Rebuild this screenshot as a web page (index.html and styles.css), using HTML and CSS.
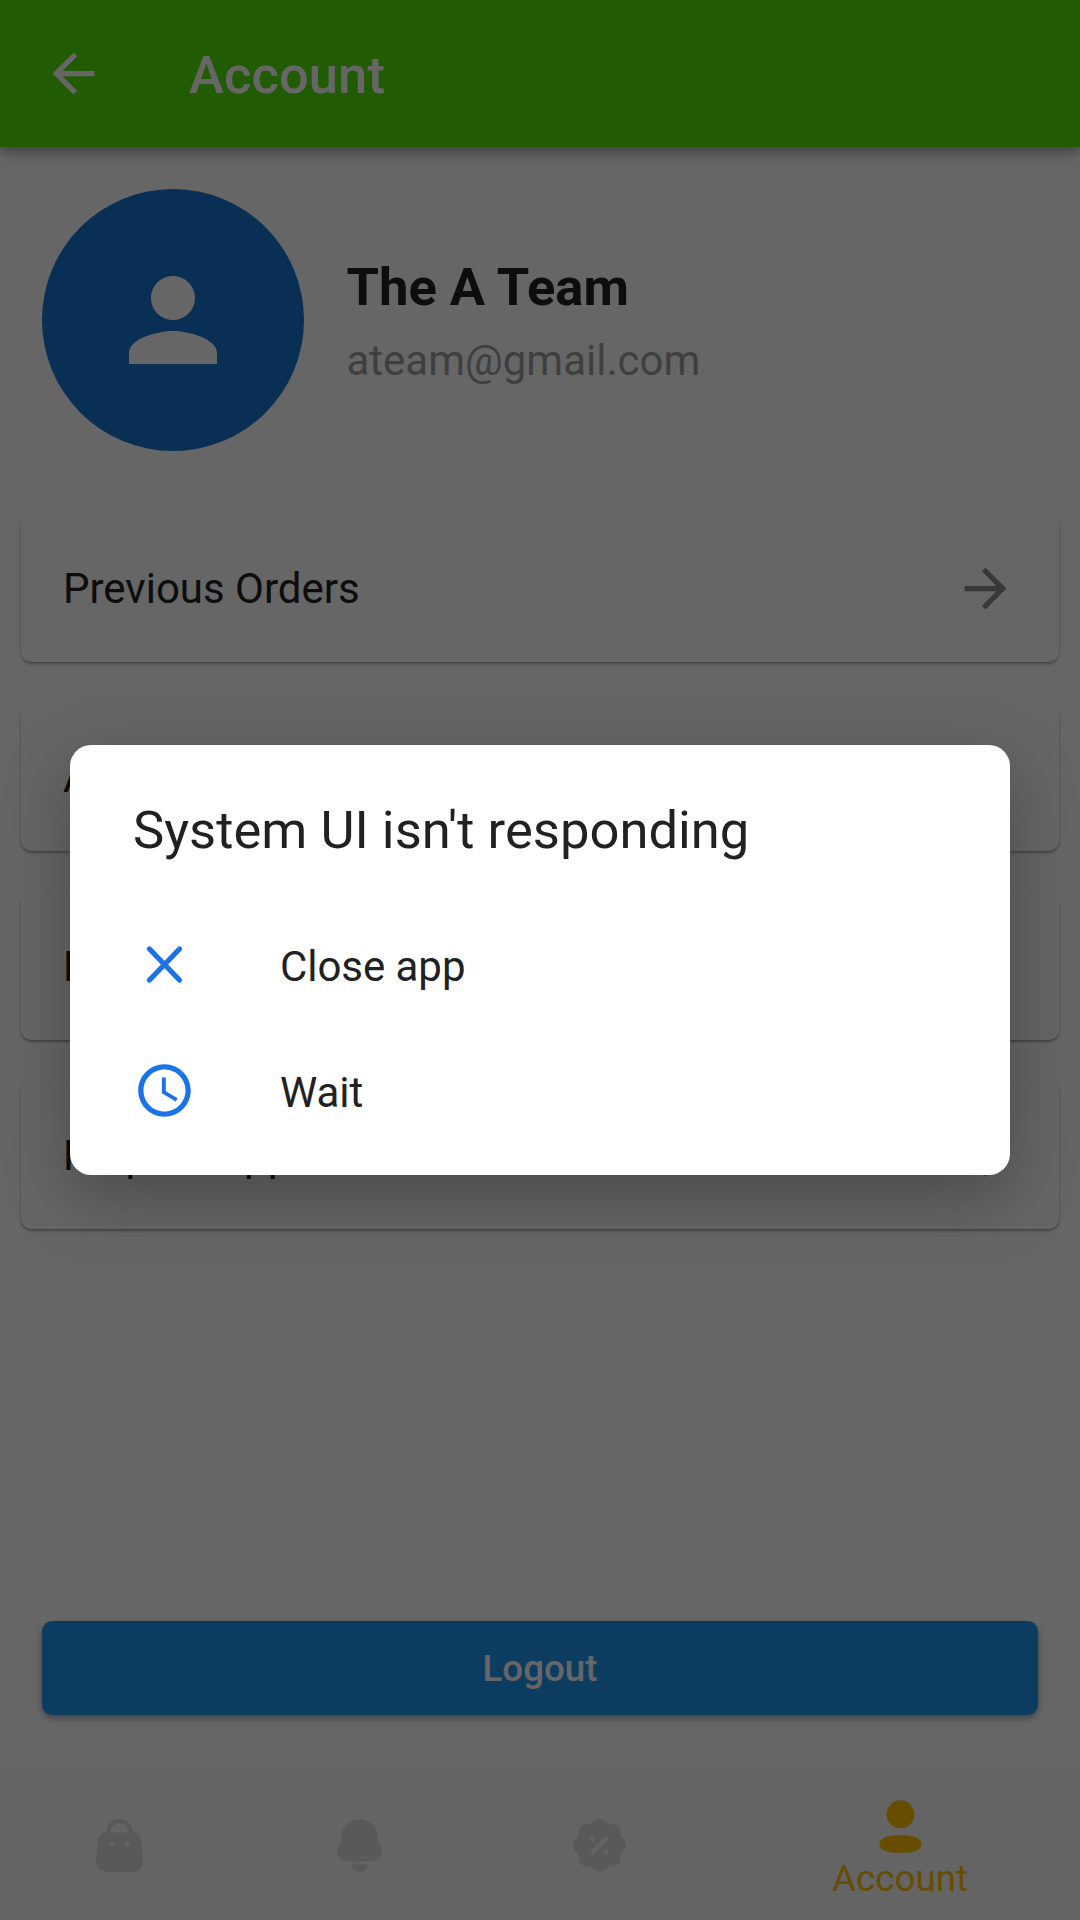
FILE: index.html
```html
<!DOCTYPE html>
<html lang="en">
<head>
<meta charset="utf-8">
<title>Account</title>
<link rel="stylesheet" href="styles.css">
</head>
<body>
<div class="screen">
  <header class="app-bar">
    <svg class="icon" viewBox="0 0 24 24"><path d="M20 11H7.83l5.59-5.59L12 4l-8 8 8 8 1.41-1.41L7.83 13H20v-2z"/></svg>
    <h1 class="app-title">Account</h1>
  </header>

  <main class="content">
    <section class="profile">
      <div class="avatar">
        <svg class="avatar-icon" viewBox="0 0 24 24"><path d="M12 12c2.21 0 4-1.79 4-4s-1.79-4-4-4-4 1.79-4 4 1.79 4 4 4zm0 2c-2.67 0-8 1.34-8 4v2h16v-2c0-2.66-5.33-4-8-4z"/></svg>
      </div>
      <div class="identity">
        <div class="name">The A Team</div>
        <div class="email">ateam@gmail.com</div>
      </div>
    </section>

    <nav class="menu">
      <div class="card"><span>Previous Orders</span><svg class="icon" viewBox="0 0 24 24"><path d="M12 4l-1.41 1.41L16.17 11H4v2h12.17l-5.58 5.59L12 20l8-8z"/></svg></div>
      <div class="card"><span>Address</span><svg class="icon" viewBox="0 0 24 24"><path d="M12 4l-1.41 1.41L16.17 11H4v2h12.17l-5.58 5.59L12 20l8-8z"/></svg></div>
      <div class="card"><span>Payment</span><svg class="icon" viewBox="0 0 24 24"><path d="M12 4l-1.41 1.41L16.17 11H4v2h12.17l-5.58 5.59L12 20l8-8z"/></svg></div>
      <div class="card"><span>Help &amp; Support</span><svg class="icon" viewBox="0 0 24 24"><path d="M12 4l-1.41 1.41L16.17 11H4v2h12.17l-5.58 5.59L12 20l8-8z"/></svg></div>
    </nav>

    <div class="logout">Logout</div>
  </main>

  <footer class="bottom-nav">
    <div class="tab">
      <svg class="icon" viewBox="0 0 63 63">
        <path d="M20.500 19.500V18a11 11 0 0 1 22 0V19.500" fill="none" stroke="currentColor" stroke-width="4"/>
        <path fill-rule="evenodd" d="M18.500 18.500H44.500Q51.500 18.500 52.600 26L55 44Q56.300 57.900 43 57.900H20Q6.700 57.900 8 44L10.400 26Q11.500 18.500 18.500 18.500ZM23.700 27a2.500 2.500 0 1 0 .01 0ZM39 27a2.500 2.500 0 1 0 .01 0Z"/>
      </svg>
    </div>
    <div class="tab">
      <svg class="icon" viewBox="0 0 63 63">
        <path d="M31.500 5.200C41.500 5.200 49.400 13 49.400 22.500C49.400 27 49.200 27.500 51.500 30.500C53.300 32.800 54 34.500 54 37.500C53.500 43.500 49 46.900 43 47.200Q31.500 47.700 20 47.200C14 46.900 9.500 43.500 9 37.500C9 34.500 9.700 32.800 11.500 30.500C13.800 27.500 13.600 27 13.600 22.500C13.600 13 21.500 5.200 31.500 5.200Z"/>
        <path d="M26.500 50.200H36.500Q40 50.500 39 53Q36.500 57.900 31.500 57.900Q26.500 57.900 24 53Q23 50.500 26.500 50.200Z"/>
      </svg>
    </div>
    <div class="tab">
      <svg class="icon" viewBox="0 0 63 63">
        <path d="M31.500 5.200C35 5.200 37 7 38.500 8.600Q40 10.200 42.500 10.200H44Q52.500 10.700 52.500 19V20.500Q52.500 23 54.200 24.500C59 28.700 59 34.300 54.200 38.500Q52.500 40 52.500 42.500V44Q52.500 52 44 52.200H42.500Q40 52.200 38.500 54C34.300 58.500 28.700 58.500 24.500 54Q23 52.200 20.500 52.200H19Q10.500 52 10.500 44V42.500Q10.500 40 8.800 38.500C4 34.300 4 28.700 8.800 24.500Q10.500 23 10.500 20.500V19Q10.500 10.700 19 10.200H20.500Q23 10.200 24.500 8.600C26 7 28 5.200 31.500 5.200Z"/>
        <g class="cutout"><path d="M24.700 38.200L38.500 24.500" stroke-width="4" stroke-linecap="round"/><circle cx="24.500" cy="25" r="2.200"/><circle cx="38.300" cy="38" r="2.200"/></g>
      </svg>
    </div>
    <div class="tab tab-active">
      <svg class="icon" viewBox="0 0 63 63">
        <circle cx="31.500" cy="19.300" r="14"/>
        <path d="M31.500 40.300C44 40.300 52.500 42.600 52.500 49.100S44 58 31.500 58S10.500 55.600 10.500 49.100S19 40.300 31.500 40.300Z"/>
      </svg>
      <span>Account</span>
    </div>
  </footer>

  <div class="scrim">
    <section class="dialog" role="dialog">
      <h2 class="dialog-title">System UI isn't responding</h2>
      <div class="option">
        <svg class="icon" viewBox="0 0 24 24"><path d="M6.300 6.100L17.700 17.900M17.700 6.100L6.300 17.900" fill="none" stroke="currentColor" stroke-width="2" stroke-linecap="round"/></svg>
        <span>Close app</span>
      </div>
      <div class="option">
        <svg class="icon" viewBox="0 0 24 24"><path d="M11.990 2C6.470 2 2 6.480 2 12s4.470 10 9.990 10C17.520 22 22 17.520 22 12S17.520 2 11.990 2zM12 20c-4.420 0-8-3.580-8-8s3.580-8 8-8 8 3.580 8 8-3.580 8-8 8zm.5-13H11v6l5.250 3.150.75-1.230-4.500-2.670z"/></svg>
        <span>Wait</span>
      </div>
    </section>
  </div>
</div>
</body>
</html>
```
FILE: styles.css
```css
* {
  box-sizing: border-box;
}

body {
  margin: 0;
  font-family: Roboto, sans-serif;
  font-size: 42px;
  color: #212121;
}

.screen {
  position: relative;
  display: flex;
  flex-direction: column;
  width: 1080px;
  height: 1920px;
  overflow: hidden;
  background: #fff;
}

.icon {
  display: block;
  flex: none;
  width: 63px;
  height: 63px;
  fill: currentColor;
}

.app-bar {
  display: flex;
  align-items: center;
  gap: 84px;
  height: 147px;
  flex: none;
  padding: 0 42px;
  background: #53e60d;
  color: #fff;
  box-shadow: 0 5px 10px rgba(0, 0, 0, 0.22), 0 8px 14px rgba(0, 0, 0, 0.14);
}

.app-title {
  margin: 3px 0 0;
  font-size: 52.5px;
  font-weight: 500;
  letter-spacing: 0.1px;
}

.content {
  flex: 1;
  display: flex;
  flex-direction: column;
}

.profile {
  display: flex;
  align-items: center;
  gap: 42.5px;
  height: 346.5px;
  padding: 0 42px;
}

.avatar {
  display: flex;
  align-items: center;
  justify-content: center;
  width: 262px;
  height: 262px;
  margin-bottom: 0.5px;
  border-radius: 50%;
  background: #1976d2;
}

.avatar-icon {
  width: 132px;
  height: 132px;
  fill: #fff;
}

.identity {
  display: flex;
  flex-direction: column;
  gap: 18px;
}

.name {
  font-size: 52.5px;
  font-weight: 700;
}

.email {
  color: #9e9e9e;
}

.menu {
  display: flex;
  flex-direction: column;
  gap: 42px;
  padding: 21px;
}

.card {
  display: flex;
  align-items: center;
  justify-content: space-between;
  height: 147px;
  padding: 0 42px;
  border-radius: 10.5px;
  background: #fff;
  box-shadow: 0 2px 3px rgba(0, 0, 0, 0.3), 0 1px 2px rgba(0, 0, 0, 0.08);
}

.card .icon {
  color: rgba(0, 0, 0, 0.45);
}

.logout {
  display: flex;
  align-items: center;
  justify-content: center;
  height: 94.5px;
  margin: auto 42px 56px;
  padding-top: 1.5px;
  border-radius: 10.5px;
  background: #2196f3;
  color: #fff;
  font-size: 36.75px;
  font-weight: 500;
  box-shadow: 0 3px 6px rgba(0, 0, 0, 0.28), 0 4px 8px rgba(0, 0, 0, 0.1);
}

.bottom-nav {
  display: grid;
  grid-template-columns: 2fr 2fr 2fr 3fr;
  flex: none;
  height: 149px;
  background: #f9f9f9;
  box-shadow: 0 -1px 5px rgba(0, 0, 0, 0.03);
}

.tab {
  display: flex;
  flex-direction: column;
  align-items: center;
  padding: 43px 1px 0 0;
  color: #dedede;
}

.cutout {
  fill: #f9f9f9;
  stroke: #f9f9f9;
  stroke-width: 0;
}

.tab-active {
  padding: 24px 0 0;
  color: #ffc107;
  font-size: 36.75px;
}

.tab-active span {
  margin-top: -1px;
}

.scrim {
  position: absolute;
  inset: 0;
  display: flex;
  align-items: center;
  justify-content: center;
  background: rgba(0, 0, 0, 0.6);
}

.dialog {
  width: 940px;
  height: 430px;
  padding: 54px 63px 0;
  border-radius: 21px;
  background: #fff;
  box-shadow: 0 22px 68px rgba(0, 0, 0, 0.28);
}

.dialog-title {
  margin: 0 0 40px;
  font-size: 52.5px;
  font-weight: 400;
  letter-spacing: 0.03px;
}

.option {
  display: flex;
  align-items: center;
  gap: 84px;
  height: 126px;
}

.option span {
  padding-top: 4px;
  letter-spacing: -0.05px;
}

.option .icon {
  color: #1a73e8;
}
```
